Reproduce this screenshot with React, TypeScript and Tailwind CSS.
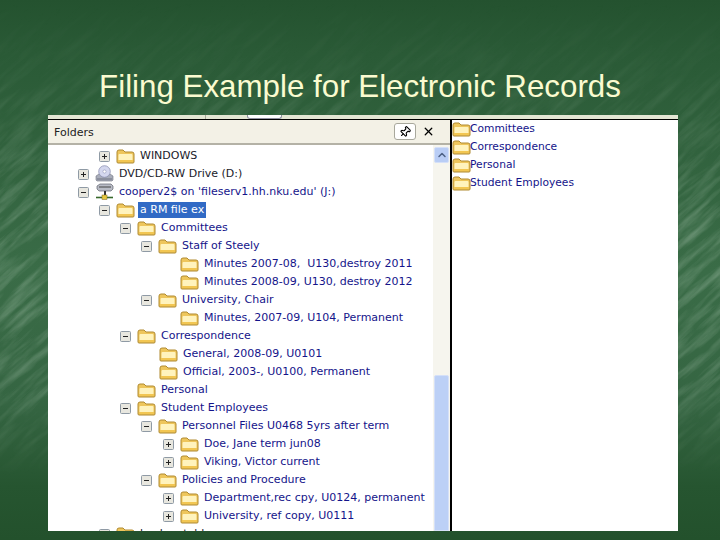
import { Pin, X, ChevronUp } from "lucide-react";

type Row = { label: string; pad: string; box?: "plus" | "minus"; icon?: "drive" | "net"; selected?: boolean; dark?: boolean };

const rows: Row[] = [
  { label: "WINDOWS", pad: "pl-[51px]", box: "plus", dark: true },
  { label: "DVD/CD-RW Drive (D:)", pad: "pl-[30px]", box: "plus", icon: "drive", dark: true },
  { label: "cooperv2$ on 'fileserv1.hh.nku.edu' (J:)", pad: "pl-[30px]", box: "minus", icon: "net" },
  { label: "a RM file ex", pad: "pl-[51px]", box: "minus", selected: true },
  { label: "Committees", pad: "pl-[72px]", box: "minus" },
  { label: "Staff of Steely", pad: "pl-[93px]", box: "minus" },
  { label: "Minutes 2007-08,  U130,destroy 2011", pad: "pl-[132px]" },
  { label: "Minutes 2008-09, U130, destroy 2012", pad: "pl-[132px]" },
  { label: "University, Chair", pad: "pl-[93px]", box: "minus" },
  { label: "Minutes, 2007-09, U104, Permanent", pad: "pl-[132px]" },
  { label: "Correspondence", pad: "pl-[72px]", box: "minus" },
  { label: "General, 2008-09, U0101", pad: "pl-[111px]" },
  { label: "Official, 2003-, U0100, Permanent", pad: "pl-[111px]" },
  { label: "Personal", pad: "pl-[89px]" },
  { label: "Student Employees", pad: "pl-[72px]", box: "minus" },
  { label: "Personnel Files U0468 5yrs after term", pad: "pl-[93px]", box: "minus" },
  { label: "Doe, Jane term jun08", pad: "pl-[115px]", box: "plus" },
  { label: "Viking, Victor current", pad: "pl-[115px]", box: "plus" },
  { label: "Policies and Procedure", pad: "pl-[93px]", box: "minus" },
  { label: "Department,rec cpy, U0124, permanent", pad: "pl-[115px]", box: "plus" },
  { label: "University, ref copy, U0111", pad: "pl-[115px]", box: "plus" },
  { label: "backup tables", pad: "pl-[51px]", box: "plus", dark: true },
];

const rightRows = ["Committees", "Correspondence", "Personal", "Student Employees"];

const Folder = () => (
  <svg width="19" height="15" viewBox="0 0 19 15" className="block shrink-0">
    <path d="M1 13V3q0-2 2-2h4l2 2h7q2 0 2 2v8q0 1-1 1H2q-1 0-1-1z" fill="#eec65c" stroke="#b08a30" />
    <path d="M2.5 6q0-1 1-1h12q1 0 1 1v5h-14z" fill="#fff3bd" />
    <path d="M2 11h15v2H2z" fill="#f2c652" />
  </svg>
);

const ExpandBox = ({ type }: { type: "plus" | "minus" }) => (
  <svg width="11" height="11" viewBox="0 0 11 11" className="shrink-0">
    <rect x="0.5" y="0.5" width="10" height="10" rx="1" fill="#e8e7df" stroke="#8f9aa5" />
    <path d={type === "plus" ? "M3 5.5h5M5.5 3v5" : "M3 5.5h5"} stroke="#222" />
  </svg>
);

const DriveIcon = () => (
  <svg width="19" height="18" viewBox="0 0 19 18" className="block shrink-0">
    <path d="M1 11l3-2h11l3 2v4l-1 1H2l-1-1z" fill="#a9adba" stroke="#6f7382" strokeWidth="0.6" />
    <path d="M2 14h15" stroke="#6f7382" />
    <circle cx="9.5" cy="6.5" r="5.8" fill="#d4d7ee" stroke="#8286aa" strokeWidth="0.7" />
    <circle cx="9.5" cy="6.5" r="1.6" fill="#fff" stroke="#8286aa" strokeWidth="0.5" />
  </svg>
);

const NetIcon = () => (
  <svg width="19" height="18" viewBox="0 0 19 18" className="block shrink-0">
    <path d="M2 3l3-2h11l2 2v3l-2 2H4L2 6z" fill="#b9bcc6" stroke="#60636f" strokeWidth="0.7" />
    <path d="M4 4h12" stroke="#444" />
    <path d="M10 8v5" stroke="#333" strokeWidth="2" />
    <path d="M1 14.5h17" stroke="#37682a" strokeWidth="1.6" />
    <rect x="7" y="12" width="5" height="4.5" fill="#e6c840" stroke="#7a6a20" strokeWidth="0.5" />
  </svg>
);

export default function App() {
  return (
    <div className="relative h-[540px] w-[720px] overflow-hidden bg-[#2c5a38] font-['DejaVu_Sans',sans-serif]">
      {/* chalkboard texture */}
      <svg className="absolute inset-0" width="720" height="540">
        <defs>
          <filter id="chalk" x="0" y="0" width="100%" height="100%">
            <feTurbulence type="fractalNoise" baseFrequency="0.018 0.13" numOctaves="4" seed="11" />
            <feColorMatrix values="0 0 0 0 0.62  0 0 0 0 0.76  0 0 0 0 0.64  1.6 0 0 0 -0.62" />
          </filter>
          <linearGradient id="shade" x1="0" y1="0" x2="0" y2="1">
            <stop offset="0" stopColor="#24522f" />
            <stop offset="0.1" stopColor="#2a5a36" />
            <stop offset="0.5" stopColor="#3a6c47" />
            <stop offset="0.75" stopColor="#356542" />
            <stop offset="0.9" stopColor="#265530" />
            <stop offset="1" stopColor="#23512c" />
          </linearGradient>
          <linearGradient id="fade" x1="0" y1="0" x2="0" y2="1">
            <stop offset="0" stopColor="#000" />
            <stop offset="0.15" stopColor="#333" />
            <stop offset="0.4" stopColor="#fff" />
            <stop offset="0.7" stopColor="#ccc" />
            <stop offset="0.88" stopColor="#000" />
          </linearGradient>
          <mask id="fadeMask">
            <rect width="720" height="540" fill="url(#fade)" />
          </mask>
        </defs>
        <rect width="720" height="540" fill="url(#shade)" />
        <g mask="url(#fadeMask)">
          <rect x="-400" y="-400" width="1500" height="1500" filter="url(#chalk)" opacity="0.4" transform="rotate(-42 360 270)" />
        </g>
      </svg>

      <div className="relative flex h-full flex-col">
        <h1 className="flex h-[115px] shrink-0 items-end justify-center pb-[11px] font-['Liberation_Sans',sans-serif] text-[31.3px] leading-[34px] text-[#fbfbd0]">
          Filing Example for Electronic Records
        </h1>

        <div className="ml-[48px] flex h-[416px] w-[630px] flex-col overflow-hidden bg-white">
          <div className="flex h-[4px] shrink-0 bg-[#e4e6d4] pl-[157px]">
            <div className="w-[1px] bg-[#a8aa9a]" />
            <div className="ml-[41px] w-[35px] rounded-b-[3px] border-x border-b border-[#8f90a0] bg-white" />
          </div>
          <div className="flex min-h-0 flex-1 border-t border-black">
            <div className="flex w-[402px] shrink-0 flex-col">
              <div className="flex h-[25px] shrink-0 items-center border-b-2 border-[#b4b2a6] bg-[#f3f1e6] pl-[6px] pr-[15px] text-[11px] text-[#222]">
                <span className="flex-1 pt-[3px]">Folders</span>
                <span className="flex h-[17px] w-[22px] items-center justify-center rounded-[3px] border border-[#a8a89c] bg-white">
                  <Pin size={12} strokeWidth={2.2} className="rotate-45 text-black" />
                </span>
                <X size={13} strokeWidth={2.4} className="ml-[6px] text-black" />
              </div>
              <div className="flex min-h-0 flex-1">
                <div className="min-w-0 flex-1 overflow-hidden pt-[2px]">
                  {rows.map((r) => (
                    <div key={r.label} className={`flex h-[18px] items-center whitespace-pre text-[11px] ${r.pad} ${r.dark ? "text-[#1a1a2a]" : "text-[#14148a]"}`}>
                      {r.box && <ExpandBox type={r.box} />}
                      <span className={r.box ? "ml-[6px]" : ""}>
                        {r.icon === "drive" ? <DriveIcon /> : r.icon === "net" ? <NetIcon /> : <Folder />}
                      </span>
                      <span className={`ml-[3px] px-[2px] leading-[16px] ${r.selected ? "bg-[#316ac5] text-white" : ""}`}>{r.label}</span>
                    </div>
                  ))}
                </div>
                <div className="flex w-[17px] shrink-0 flex-col bg-[#f6f5ee] pl-[1px] pr-[1px] pt-[2px]">
                  <div className="flex h-[16px] shrink-0 items-center justify-center rounded-[2px] border border-[#d5e0f8] bg-[#b9cdf5]">
                    <ChevronUp size={12} strokeWidth={3} className="text-[#4d6185]" />
                  </div>
                  <div className="flex-1" />
                  <div className="h-[156px] shrink-0 rounded-t-[2px] border border-[#d5e0f8] bg-[#bcd0f6]" />
                </div>
              </div>
            </div>
            <div className="flex-1 border-l-2 border-black">
              {rightRows.map((label) => (
                <div key={label} className="flex h-[18px] items-center text-[10.7px] text-[#14148a]">
                  <Folder />
                  <span className="-ml-[1px]">{label}</span>
                </div>
              ))}
            </div>
          </div>
        </div>
      </div>
    </div>
  );
}
